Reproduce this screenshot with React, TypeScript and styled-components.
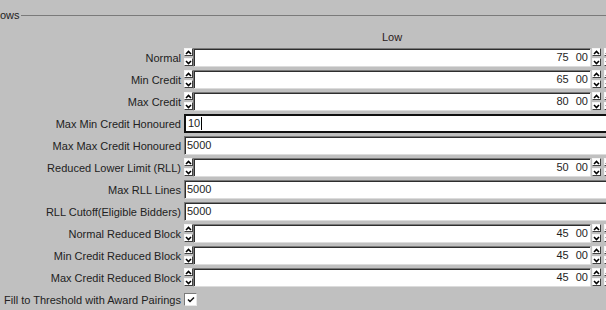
import React from "react";
import styled, { createGlobalStyle } from "styled-components";

const Global = createGlobalStyle`
  html, body { margin: 0; padding: 0; background: #c0c0c0; }
  body { font-family: "Liberation Sans", Arial, sans-serif; font-size: 11px; color: #222; }
`;

const Page = styled.div`
  width: 606px;
  height: 310px;
  overflow: hidden;
  background: #c0c0c0;
`;

const Legend = styled.div`
  display: flex;
  align-items: center;
  gap: 1px;
  height: 14px;
  margin-top: 8px;
  white-space: nowrap;
`;

const LegendLine = styled.div`
  flex: 1;
  height: 1px;
  background: #7a7a7a;
`;

const ColHeader = styled.div`
  margin: 9px 0 3px 193px;
  width: 398px;
  height: 13px;
  line-height: 13px;
  text-align: center;
  color: #2a1a1a;
`;

const Rows = styled.div`
  display: flex;
  flex-direction: column;
  gap: 2px;
`;

const Row = styled.div`
  display: grid;
  grid-template-columns: 181px auto;
  column-gap: 3px;
  align-items: center;
  height: 20px;
  white-space: nowrap;
`;

const Label = styled.div`
  text-align: right;
  color: #222;
  padding-top: 1px;
`;

const Control = styled.div`
  display: flex;
  align-items: center;
`;

const SpinCol = styled.div<{ $gap?: number }>`
  display: flex;
  flex-direction: column;
  gap: 2px;
  width: 9px;
  margin-left: ${(p) => p.$gap ?? 0}px;
  flex: none;
`;

const SpinBtn = styled.div`
  box-sizing: border-box;
  width: 9px;
  height: 8px;
  background: #fff;
  border: 1px solid;
  border-color: #f4f4f4 #404040 #404040 #f4f4f4;
  display: flex;
  align-items: center;
  justify-content: center;
`;

const Field = styled.div<{ $w: number; $focus?: boolean; $right?: boolean }>`
  box-sizing: border-box;
  flex: none;
  width: ${(p) => p.$w}px;
  height: 19px;
  background: #fff;
  display: flex;
  align-items: center;
  justify-content: ${(p) => (p.$right ? "flex-end" : "flex-start")};
  gap: ${(p) => (p.$right ? 7 : 0)}px;
  padding: ${(p) => (p.$right ? "0 2px 0 0" : "0 0 0 2px")};
  color: #1e1e1e;
  border: ${(p) => (p.$focus ? "2px solid #111" : "1px solid")};
  border-color: ${(p) => (p.$focus ? "#111" : "#7a7a7a #dcdcdc #dcdcdc #7a7a7a")};
  box-shadow: ${(p) => (p.$focus ? "none" : "inset 1px 1px 0 #2e2e2e")};
`;

const Caret = styled.span`
  display: inline-block;
  width: 1px;
  height: 13px;
  background: #000;
  margin-left: 1px;
`;

const Check = styled.div`
  box-sizing: border-box;
  width: 13px;
  height: 13px;
  background: #fff;
  border: 1px solid;
  border-color: #7a7a7a #e8e8e8 #e8e8e8 #7a7a7a;
  display: flex;
  align-items: center;
  justify-content: center;
`;

const Arrow = ({ down }: { down?: boolean }) => (
  <svg width="7" height="5" viewBox="0 0 7 5">
    <polyline
      points={down ? "1,1 3.5,3.5 6,1" : "1,4 3.5,1.5 6,4"}
      fill="none"
      stroke="#000"
      strokeWidth="1.6"
    />
  </svg>
);

const Spinner = ({ gap }: { gap?: number }) => (
  <SpinCol $gap={gap}>
    <SpinBtn>
      <Arrow />
    </SpinBtn>
    <SpinBtn>
      <Arrow down />
    </SpinBtn>
  </SpinCol>
);

type RowDef =
  | { label: string; kind: "spin"; value: string }
  | { label: string; kind: "text"; value: string; focus?: boolean }
  | { label: string; kind: "check" };

const rows: RowDef[] = [
  { label: "Normal", kind: "spin", value: "75" },
  { label: "Min Credit", kind: "spin", value: "65" },
  { label: "Max Credit", kind: "spin", value: "80" },
  { label: "Max Min Credit Honoured", kind: "text", value: "10", focus: true },
  { label: "Max Max Credit Honoured", kind: "text", value: "5000" },
  { label: "Reduced Lower Limit (RLL)", kind: "spin", value: "50" },
  { label: "Max RLL Lines", kind: "text", value: "5000" },
  { label: "RLL Cutoff(Eligible Bidders)", kind: "text", value: "5000" },
  { label: "Normal Reduced Block", kind: "spin", value: "45" },
  { label: "Min Credit Reduced Block", kind: "spin", value: "45" },
  { label: "Max Credit Reduced Block", kind: "spin", value: "45" },
  { label: "Fill to Threshold with Award Pairings", kind: "check" },
];

export default function App() {
  return (
    <Page>
      <Global />
      <Legend>
        <span>ows</span>
        <LegendLine />
      </Legend>
      <ColHeader>Low</ColHeader>
      <Rows>
        {rows.map((r) => (
          <Row key={r.label}>
            <Label>{r.label}</Label>
            <Control>
              {r.kind === "spin" && (
                <>
                  <Spinner />
                  <Field $w={398} $right>
                    <span>{r.value}</span>
                    <span>00</span>
                  </Field>
                  <Spinner gap={1} />
                  <Spinner gap={3} />
                </>
              )}
              {r.kind === "text" && (
                <Field $w={460} $focus={r.focus}>
                  <span>{r.value}</span>
                  {r.focus && <Caret />}
                </Field>
              )}
              {r.kind === "check" && (
                <Check>
                  <svg width="8" height="7" viewBox="0 0 8 7">
                    <polyline points="1,3.5 3,5.5 7,1.5" fill="none" stroke="#111" strokeWidth="1.5" />
                  </svg>
                </Check>
              )}
            </Control>
          </Row>
        ))}
      </Rows>
    </Page>
  );
}
